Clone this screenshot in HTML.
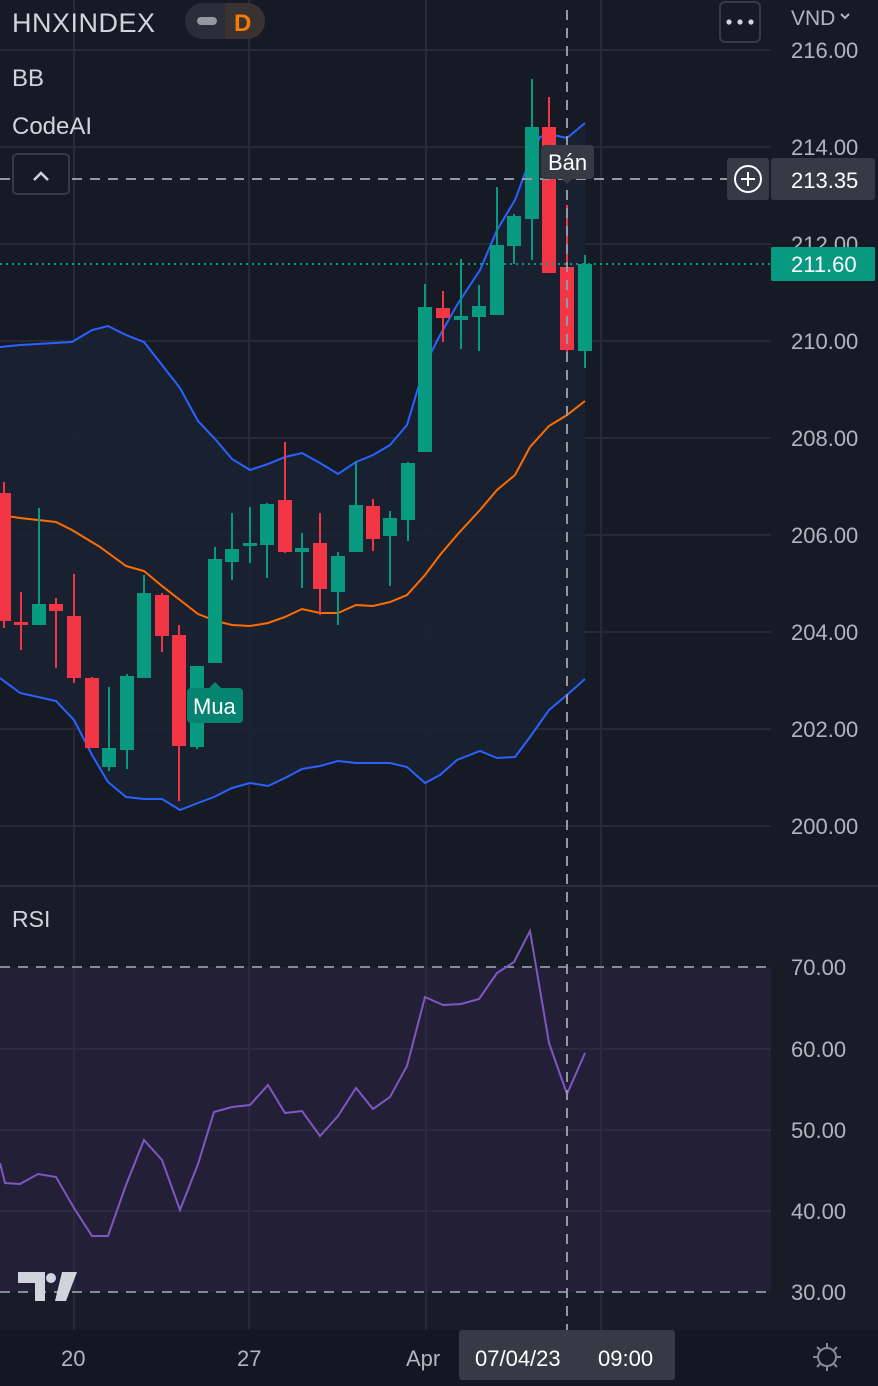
<!DOCTYPE html>
<html><head><meta charset="utf-8"><style>
html,body{margin:0;padding:0;background:#161a25;width:878px;height:1386px;overflow:hidden}
svg{display:block}
text{font-family:"Liberation Sans","DejaVu Sans",sans-serif}
</style></head><body>
<svg width="878" height="1386" viewBox="0 0 878 1386" xmlns="http://www.w3.org/2000/svg">
<rect width="878" height="1386" fill="#161a25"/>
<rect x="0" y="886" width="878" height="444" fill="#181c27"/>
<!-- grid -->
<g stroke="#262a35" stroke-width="2">
<line x1="0" y1="50" x2="771" y2="50"/><line x1="0" y1="147" x2="771" y2="147"/><line x1="0" y1="244" x2="771" y2="244"/><line x1="0" y1="341" x2="771" y2="341"/><line x1="0" y1="438" x2="771" y2="438"/><line x1="0" y1="535" x2="771" y2="535"/><line x1="0" y1="632" x2="771" y2="632"/><line x1="0" y1="729" x2="771" y2="729"/><line x1="0" y1="826" x2="771" y2="826"/>
<line x1="74" y1="0" x2="74" y2="1330"/><line x1="249" y1="0" x2="249" y2="1330"/><line x1="426" y1="0" x2="426" y2="1330"/><line x1="601" y1="0" x2="601" y2="1330"/>
</g>
<line x1="0" y1="886" x2="878" y2="886" stroke="#2a2e39" stroke-width="2"/>
<!-- BB fill -->
<polygon fill="#1a2233" opacity="0.9" points="0,347 20,345 72,342 92,330 108,326 126,335 144,342 162,365 180,388 198,421 216,440 232,459 250,470 268,464 285,457 302,453 320,463 338,474 356,462 373,455 390,445 407,425 425,365 439,337 457,305 480,270 497,230 515,200 530,160 540,137 549,134 567,138 585,123 585,679 567,695 549,710 530,737 515,757 497,758 480,751 457,760 440,775 425,783 407,767 390,763 373,763 356,763 338,761 320,766 302,769 285,778 268,786 250,783 232,788 214,797 198,803 180,810 162,799 144,799 126,797 108,782 92,755 74,720 56,701 38,697 20,693 0,678"/>
<g fill="none" stroke-width="2">
<polyline stroke="#2962ff" points="0,347 20,345 72,342 92,330 108,326 126,335 144,342 162,365 180,388 198,421 216,440 232,459 250,470 268,464 285,457 302,453 320,463 338,474 356,462 373,455 390,445 407,425 425,365 439,337 457,305 480,270 497,230 515,200 530,160 540,137 549,134 567,138 585,123"/>
<polyline stroke="#2962ff" points="0,678 20,693 38,697 56,701 74,720 92,755 108,782 126,797 144,799 162,799 180,810 198,803 214,797 232,788 250,783 268,786 285,778 302,769 320,766 338,761 356,763 373,763 390,763 407,767 425,783 440,775 457,760 480,751 497,758 515,757 530,737 549,710 567,695 585,679"/>
<polyline stroke="#ff6d00" points="0,515 20,518 56,522 72,530 100,547 126,566 144,571 162,586 180,600 198,614 216,621 232,625 250,626 268,623 285,617 302,609 320,613 338,613 356,605 373,606 390,602 407,595 425,575 440,555 457,535 480,510 497,490 515,475 530,447 549,426 567,415 585,401"/>
</g>
<!-- candles -->
<g stroke-width="2">
<g stroke="#f23645" fill="#f23645">
<line x1="4" y1="482" x2="4" y2="628"/><rect x="-3" y="493" width="14" height="128" stroke="none"/>
<line x1="21" y1="592" x2="21" y2="650"/><rect x="14" y="622" width="14" height="3" stroke="none"/>
<line x1="56" y1="598" x2="56" y2="668"/><rect x="49" y="604" width="14" height="7" stroke="none"/>
<line x1="74" y1="574" x2="74" y2="683"/><rect x="67" y="616" width="14" height="62" stroke="none"/>
<line x1="92" y1="677" x2="92" y2="748"/><rect x="85" y="678" width="14" height="70" stroke="none"/>
<line x1="162" y1="593" x2="162" y2="652"/><rect x="155" y="595" width="14" height="41" stroke="none"/>
<line x1="179" y1="625" x2="179" y2="801"/><rect x="172" y="635" width="14" height="111" stroke="none"/>
<line x1="285" y1="442" x2="285" y2="553"/><rect x="278" y="500" width="14" height="52" stroke="none"/>
<line x1="320" y1="513" x2="320" y2="615"/><rect x="313" y="543" width="14" height="46" stroke="none"/>
<line x1="373" y1="499" x2="373" y2="551"/><rect x="366" y="506" width="14" height="33" stroke="none"/>
<line x1="443" y1="291" x2="443" y2="342"/><rect x="436" y="308" width="14" height="10" stroke="none"/>
<line x1="549" y1="97" x2="549" y2="273"/><rect x="542" y="127" width="14" height="146" stroke="none"/>
<line x1="567" y1="205" x2="567" y2="352"/><rect x="560" y="267" width="14" height="83" stroke="none"/>
</g>
<g stroke="#089981" fill="#089981">
<line x1="39" y1="508" x2="39" y2="625"/><rect x="32" y="604" width="14" height="21" stroke="none"/>
<line x1="109" y1="687" x2="109" y2="771"/><rect x="102" y="748" width="14" height="19" stroke="none"/>
<line x1="127" y1="674" x2="127" y2="769"/><rect x="120" y="676" width="14" height="74" stroke="none"/>
<line x1="144" y1="575" x2="144" y2="678"/><rect x="137" y="593" width="14" height="85" stroke="none"/>
<line x1="197" y1="666" x2="197" y2="749"/><rect x="190" y="666" width="14" height="81" stroke="none"/>
<line x1="215" y1="547" x2="215" y2="663"/><rect x="208" y="559" width="14" height="104" stroke="none"/>
<line x1="232" y1="513" x2="232" y2="580"/><rect x="225" y="549" width="14" height="13" stroke="none"/>
<line x1="250" y1="507" x2="250" y2="563"/><rect x="243" y="543" width="14" height="3" stroke="none"/>
<line x1="267" y1="503" x2="267" y2="578"/><rect x="260" y="504" width="14" height="41" stroke="none"/>
<line x1="302" y1="533" x2="302" y2="588"/><rect x="295" y="548" width="14" height="4" stroke="none"/>
<line x1="338" y1="552" x2="338" y2="625"/><rect x="331" y="556" width="14" height="36" stroke="none"/>
<line x1="356" y1="461" x2="356" y2="552"/><rect x="349" y="505" width="14" height="47" stroke="none"/>
<line x1="390" y1="511" x2="390" y2="586"/><rect x="383" y="518" width="14" height="18" stroke="none"/>
<line x1="408" y1="462" x2="408" y2="541"/><rect x="401" y="463" width="14" height="57" stroke="none"/>
<line x1="425" y1="284" x2="425" y2="452"/><rect x="418" y="307" width="14" height="145" stroke="none"/>
<line x1="461" y1="259" x2="461" y2="349"/><rect x="454" y="316" width="14" height="4" stroke="none"/>
<line x1="479" y1="285" x2="479" y2="351"/><rect x="472" y="306" width="14" height="11" stroke="none"/>
<line x1="497" y1="187" x2="497" y2="315"/><rect x="490" y="245" width="14" height="70" stroke="none"/>
<line x1="514" y1="214" x2="514" y2="264"/><rect x="507" y="216" width="14" height="30" stroke="none"/>
<line x1="532" y1="79" x2="532" y2="260"/><rect x="525" y="127" width="14" height="92" stroke="none"/>
<line x1="585" y1="255" x2="585" y2="368"/><rect x="578" y="264" width="14" height="87" stroke="none"/>
</g>
</g>
<!-- last price line -->
<line x1="0" y1="264" x2="771" y2="264" stroke="#089981" stroke-width="2" stroke-dasharray="2 4"/>
<!-- RSI band -->
<rect x="0" y="967" width="771" height="325" fill="#221f36"/>
<g stroke="#2c2a40" stroke-width="2"><line x1="0" y1="1049" x2="771" y2="1049"/><line x1="0" y1="1130" x2="771" y2="1130"/><line x1="0" y1="1211" x2="771" y2="1211"/>
<line x1="74" y1="967" x2="74" y2="1292"/><line x1="249" y1="967" x2="249" y2="1292"/><line x1="426" y1="967" x2="426" y2="1292"/><line x1="601" y1="967" x2="601" y2="1292"/></g>
<g stroke="#868993" stroke-width="2" stroke-dasharray="10 8"><line x1="0" y1="967" x2="771" y2="967"/><line x1="0" y1="1292" x2="771" y2="1292"/></g>
<polyline fill="none" stroke="#7e57c2" stroke-width="2" points="0,1163 5,1183 20,1184 38,1174 56,1177 74,1208 92,1236 108,1236 126,1185 144,1140 162,1160 180,1210 198,1164 214,1112 232,1107 250,1105 268,1085 285,1113 302,1111 320,1136 338,1116 356,1088 373,1109 390,1097 407,1066 425,997 443,1005 461,1004 479,999 497,973 514,962 530,931 549,1043 567,1094 585,1053"/>
<!-- crosshair -->
<g stroke="#9598a1" stroke-width="2" stroke-dasharray="10 8">
<line x1="567" y1="10" x2="567" y2="1330"/>
<line x1="0" y1="179" x2="727" y2="179"/>
</g>
<!-- labels on chart -->
<rect x="541" y="145" width="53" height="34" rx="4" fill="#363a45"/>
<path d="M562 179 L567 184 L572 179Z" fill="#363a45"/>
<text x="548" y="170" font-size="22" fill="#ffffff">Bán</text>
<rect x="187" y="688" width="56" height="35" rx="4" fill="#068472"/>
<path d="M209 688 L215 682 L221 688Z" fill="#068472"/>
<text x="193" y="714" font-size="22" fill="#ffffff">Mua</text>
<!-- top left -->
<text x="12" y="32" font-size="27" fill="#d1d4dc" textLength="143">HNXINDEX</text>
<rect x="185" y="3" width="80" height="36" rx="18" fill="#2a2e39"/>
<path d="M225 3 H247 A18 18 0 0 1 247 39 H225Z" fill="#3a3230"/>
<rect x="197" y="17" width="20" height="8" rx="4" fill="#9598a1"/>
<text x="234" y="31" font-size="24" font-weight="bold" fill="#f57c00">D</text>
<text x="12" y="86" font-size="24" fill="#d1d4dc">BB</text>
<text x="12" y="134" font-size="24" fill="#d1d4dc">CodeAI</text>
<rect x="13" y="154" width="56" height="40" rx="4" fill="#161a25" stroke="#363a45" stroke-width="2"/>
<path d="M34 180 L41 173 L48 180" fill="none" stroke="#d1d4dc" stroke-width="2.5"/>
<!-- top right -->
<rect x="720" y="2" width="40" height="40" rx="5" fill="none" stroke="#363a45" stroke-width="2"/>
<circle cx="729" cy="22" r="2.6" fill="#d1d4dc"/><circle cx="740" cy="22" r="2.6" fill="#d1d4dc"/><circle cx="751" cy="22" r="2.6" fill="#d1d4dc"/>
<text x="791" y="25" font-size="21" fill="#b2b5be">VND</text>
<path d="M841 14 L845 18 L849 14" fill="none" stroke="#b2b5be" stroke-width="2"/>
<!-- price axis -->
<g font-size="22" fill="#b2b5be">
<text x="791" y="58">216.00</text><text x="791" y="155">214.00</text><text x="791" y="252">212.00</text><text x="791" y="349">210.00</text><text x="791" y="446">208.00</text><text x="791" y="543">206.00</text><text x="791" y="640">204.00</text><text x="791" y="737">202.00</text><text x="791" y="834">200.00</text>
<text x="791" y="975">70.00</text><text x="791" y="1057">60.00</text><text x="791" y="1138">50.00</text><text x="791" y="1219">40.00</text><text x="791" y="1300">30.00</text>
</g>
<rect x="727" y="158" width="42" height="42" rx="3" fill="#363a45"/>
<circle cx="748" cy="179" r="13" fill="none" stroke="#fff" stroke-width="2"/>
<path d="M741 179 H755 M748 172 V186" stroke="#fff" stroke-width="2"/>
<rect x="771" y="158" width="104" height="42" rx="3" fill="#363a45"/>
<text x="791" y="188" font-size="22" fill="#fff">213.35</text>
<rect x="771" y="247" width="104" height="34" rx="2" fill="#089981"/>
<text x="791" y="272" font-size="22" fill="#fff">211.60</text>
<text x="12" y="927" font-size="23" fill="#d1d4dc">RSI</text>
<!-- TV logo -->
<g fill="#d1d4dc">
<path d="M18 1272 H45 V1301 H35 V1283 H18Z"/>
<circle cx="51" cy="1278" r="5"/>
<path d="M62 1272 H77 L66 1301 H55Z"/>
</g>
<!-- time axis -->
<rect x="0" y="1330" width="878" height="56" fill="#131722"/>
<g font-size="22" fill="#b2b5be"><text x="61" y="1366">20</text><text x="237" y="1366">27</text><text x="406" y="1366">Apr</text></g>
<rect x="459" y="1330" width="216" height="50" rx="3" fill="#363a45"/>
<text x="475" y="1366" font-size="22" fill="#fff">07/04/23</text>
<text x="598" y="1366" font-size="22" fill="#fff">09:00</text>
<g stroke="#868993" stroke-width="2" fill="none">
<circle cx="827" cy="1357" r="9"/>
<path d="M827 1343 V1347 M827 1367 V1371 M813 1357 H817 M837 1357 H841 M817 1347 L820 1350 M837 1347 L834 1350 M817 1367 L820 1364 M837 1367 L834 1364"/>
</g>
</svg>
</body></html>
